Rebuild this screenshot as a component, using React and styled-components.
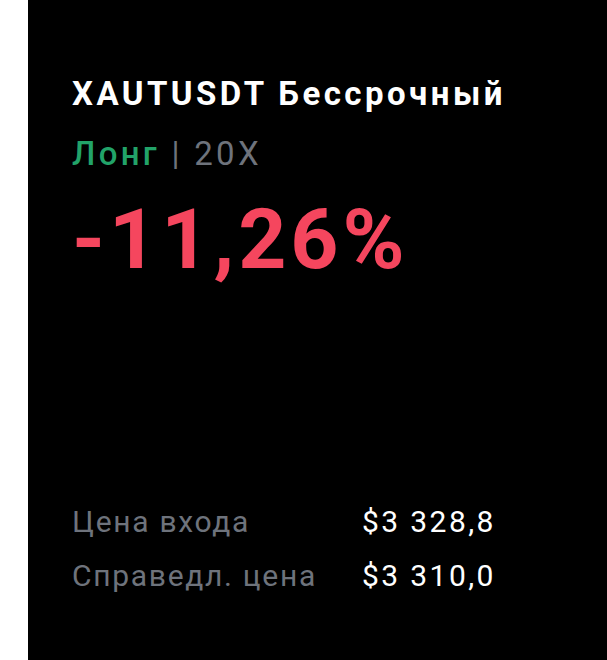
import React from 'react'
import styled, { createGlobalStyle } from 'styled-components'

const GlobalStyle = createGlobalStyle`
  html, body {
    margin: 0;
    padding: 0;
    background: #ffffff;
  }
  body {
    font-family: Roboto, "Noto Sans", "Liberation Sans", sans-serif;
  }
`

const Page = styled.div`
  display: flex;
  height: 660px;
  padding-left: 28px;
  background: #ffffff;
`

const Panel = styled.div`
  flex: 1;
  display: flex;
  flex-direction: column;
  background: #000000;
  padding: 74px 0 0 44px;
  color: #ffffff;
`

const Title = styled.h1`
  margin: 0;
  font-size: 33px;
  font-weight: 700;
  line-height: 40px;
  letter-spacing: 3.45px;
`

const Sub = styled.div`
  margin-top: 22px;
  font-size: 33px;
  line-height: 36px;
  letter-spacing: 3.3px;
  color: #6e737c;
`

const Side = styled.span`
  color: ${({ $long }) => ($long ? '#22a369' : '#f2475d')};
  font-weight: 500;
`

const Pnl = styled.div`
  margin-top: 18px;
  font-size: 84px;
  font-weight: 700;
  line-height: 100px;
  color: #f5465e;
  letter-spacing: 4px;
`

const Details = styled.div`
  margin-top: auto;
  margin-bottom: 64px;
  display: grid;
  grid-template-columns: 290px auto;
  row-gap: 14px;
  font-size: 30px;
  line-height: 40px;
`

const Label = styled.div`
  color: #6e737c;
  letter-spacing: 1.7px;
`

const Value = styled.div`
  color: #ffffff;
  letter-spacing: 2.4px;
`

const rows = [
  { label: 'Цена входа', value: '$3 328,8' },
  { label: 'Справедл. цена', value: '$3 310,0' },
]

export default function App() {
  return (
    <>
      <GlobalStyle />
      <Page>
        <Panel>
          <Title>XAUTUSDT Бессрочный</Title>
          <Sub>
            <Side $long>Лонг</Side> | 20X
          </Sub>
          <Pnl>-11,26%</Pnl>
          <Details>
            {rows.map((r) => (
              <React.Fragment key={r.label}>
                <Label>{r.label}</Label>
                <Value>{r.value}</Value>
              </React.Fragment>
            ))}
          </Details>
        </Panel>
      </Page>
    </>
  )
}
